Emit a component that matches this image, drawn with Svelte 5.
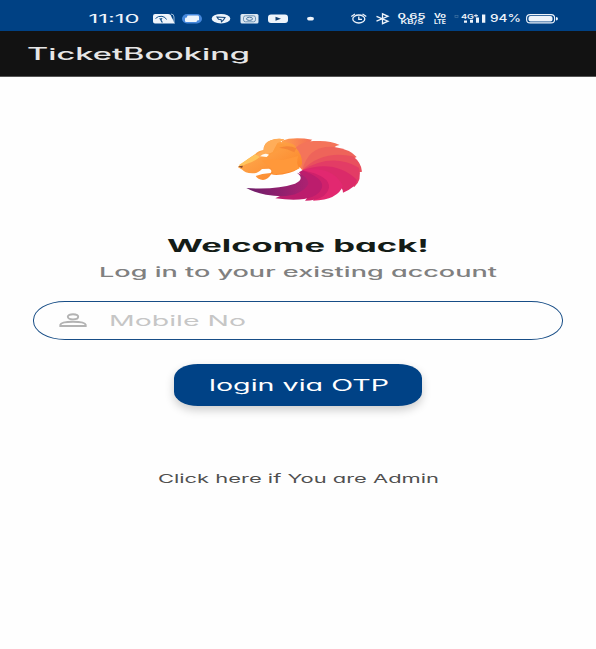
<script>
  const white = '#eef4fb';
</script>

{#snippet label(text, cls, width, size, base, height)}
  <svg class={cls} {width} {height} overflow="visible">
    <text x="0" y={base} font-size={size} textLength={width} lengthAdjust="spacingAndGlyphs">{text}</text>
  </svg>
{/snippet}

<div class="screen">
  <div class="status">
    <svg width="240" height="31" viewBox="80 0 240 31" fill={white}>
      <text x="88.5" y="22.7" font-size="11.3" font-weight="400" textLength="51" lengthAdjust="spacingAndGlyphs">11:10</text>
      <path d="M155 14H168Q171 14 171.5 17L175 23.5H155Q153 23.5 153 21.5V16Q153 14 155 14Z" />
      <path d="M155.500 18.5Q158 15.8 162 16.3Q165.500 17 166.500 19.500" fill="none" stroke="#15528b" />
      <path d="M159 18.500L162.500 18L161.500 20L163 22.500H161.500L160 19.500Z" fill="#15528b" />
      <path d="M171 14Q174 14 174 17V22" fill="none" stroke="#9ab9d5" />
      <rect x="182" y="14" width="20" height="9.5" rx="5" fill="#4688dc" />
      <rect x="187" y="15.5" width="12" height="5" rx="1.2" />
      <rect x="185" y="17.5" width="12" height="4.5" rx="1.2" />
      <ellipse cx="221" cy="18.7" rx="9.3" ry="4.8" />
      <path d="M217 17L225 17.5L223.500 20L221.500 21.800L221 19.500L218.500 19.300Z" fill="none" stroke="#15477c" stroke-width="1.1" />
      <rect x="240.5" y="14" width="18" height="9.5" rx="1.5" fill="#dce8f3" />
      <rect x="243.5" y="15.8" width="12" height="6" rx="2" fill="none" stroke="#6f94b5" />
      <ellipse cx="249.5" cy="18.8" rx="3" ry="1.6" fill="none" stroke="#49769f" />
      <rect x="268" y="14.5" width="20" height="8.5" rx="3" />
      <path d="M275.5 16.7L281 18.7L275.5 20.7Z" fill="#123f70" />
      <ellipse cx="310.5" cy="18.7" rx="3.4" ry="1.9" />
    </svg>
    <svg width="216" height="31" viewBox="345 0 216 31" fill={white}>
      <g fill="none" stroke={white} stroke-width="1.3">
        <ellipse cx="358.8" cy="19" rx="6" ry="4" />
        <path d="M351.3 16.5L355 14M366.3 16.5L362.5 14M358.8 16.5V19.3H362" />
        <path d="M376.5 16.3L388 21.2L382.5 23.7V13.8L388 16.3L376.5 21.2" />
      </g>
      <g font-weight="600">
        <text x="397.5" y="18.6" font-size="7.6" textLength="28" lengthAdjust="spacingAndGlyphs">0.65</text>
        <text x="400.5" y="24" font-size="6" textLength="23" lengthAdjust="spacingAndGlyphs">KB/S</text>
        <text x="434" y="18.4" font-size="6" font-weight="700" textLength="12" lengthAdjust="spacingAndGlyphs">Vo</text>
        <text x="434" y="23.8" font-size="6" font-weight="700" textLength="12" lengthAdjust="spacingAndGlyphs">LTE</text>
        <text x="461" y="18.8" font-size="6.3" textLength="13" lengthAdjust="spacingAndGlyphs">4G</text>
      </g>
      <path d="M474 15.700H478M476 14.200V17.200" stroke={white} />
      <rect x="455" y="15.5" width="3" height="2" fill="none" stroke="#3f72a3" stroke-width=".7" />
      <path d="M464 20.500H467V22.8H464ZM470 19.8H473V22.8H470ZM476 17.500H479V22.8H476ZM482 14.5H485.3V22.8H482Z" />
      <text x="490" y="22.4" font-size="10.5" font-weight="500" textLength="31" lengthAdjust="spacingAndGlyphs">94%</text>
      <rect x="526.6" y="14.6" width="28" height="8.3" rx="3.5" fill="none" stroke={white} stroke-width="1.1" />
      <rect x="528.500" y="16" width="24" height="5.6" rx="2" />
      <path d="M556 17Q558 17 558 18.8Q558 20.6 556 20.6Z" />
    </svg>
  </div>

  <header>{@render label('TicketBooking', 'title', 223, 16.6, 15, 20)}</header>

  <main>
    <svg class="lion" width="150" height="90" viewBox="0 0 450 270">
      <defs>
        <linearGradient id="face" x1="0" x2="1" y1="0" y2="1">
          <stop offset="0" stop-color="#ffb65b" /><stop offset="1" stop-color="#fb7e22" />
        </linearGradient>
        <linearGradient id="tail"><stop offset="0" stop-color="#6c1e69" /><stop offset="1" stop-color="#ad2171" /></linearGradient>
        <linearGradient id="top"><stop offset="0" stop-color="#ffa04b" /><stop offset="1" stop-color="#f36b58" /></linearGradient>
      </defs>
      <path d="M170 47Q205 34 262 44Q252 50 256 60L232 136L178 74Z" fill="url(#top)" />
      <path d="M212 68Q235 45 275 48Q315 46 344 60Q334 61 328 67Q276 72 232 136Q236 105 212 68Z" fill="#f4745a" />
      <path d="M232 136Q250 60 328 66Q376 73 395 96L384 101Q330 120 232 136Z" fill="#ee645a" />
      <path d="M232 136Q290 75 384 94Q409 113 411 140L402 142Q330 130 232 136Z" fill="#e9505e" />
      <path d="M232 136Q320 82 402 128Q412 164 388 186L378 180Q320 145 232 136Z" fill="#e33c65" />
      <path d="M232 136Q330 102 396 165Q393 187 354 203Q355 195 349 189Q310 150 232 136Z" fill="#db2a69" />
      <path d="M232 136Q320 120 354 182Q339 224 264 227Q290 195 232 136Z" fill="#e22870" />
      <path d="M232 136Q315 152 312 188Q302 226 240 227Q280 185 232 136Z" fill="#cf216b" />
      <path d="M222 142L232 136Q298 160 291 188Q272 236 151 220Q166 215 175 204L222 182Q240 158 222 142Z" fill="#bc1d6d" />
      <path d="M216 143Q252 154 250 178Q220 226 123 209Q89 203 64 189Q153 195 210 176Q241 162 216 143Z" fill="url(#tail)" />
      <path d="M116 75Q116 53 137 46Q157 39 178 43L165 51Q211 52 213 69Q232 89 231 116Q222 136 194 143Q158 153 139 148Q127 165 114 165Q98 164 92 153L112 147L137 144Q143 135 132 131L111 132Q98 146 82 145Q58 143 52 134L39 127Q43 119 90 88Q101 76 116 75Z" fill="url(#face)" />
      <path d="M135 47Q156 38 178 43L158 54L143 82L101 99L92 91L115 76Q116 54 135 47Z" fill="#ffad59" />
      <path d="M43 119L91 88L104 96Q86 112 62 118L43 127Z" fill="#ffc45c" />
      <path d="M157 55Q190 58 208 79L165 72L131 92L101 97L143 82Z" fill="#fd9c3e" />
      <path d="M109 107Q142 99 174 105L220 93Q211 114 224 130Q197 144 145 148Q146 128 109 107Z" fill="#ff983a" />
      <path d="M162 68Q190 58 214 70L208 82Q190 72 162 68Z" fill="#f58537" />
      <path d="M105 94Q117 82 132 89L125 96Z" fill="#fffaf2" />
      <path d="M39 124L54 122L51 129Z" fill="#8a4a2a" />
    </svg>

    {@render label('Welcome back!', 'welcome', 262, 16.8, 16, 20)}
    {@render label('Log in to your existing account', 'sub', 398, 13.5, 13, 18)}

    <div class="field">
      <svg class="person" width="28" height="16" viewBox="0 0 28 16" fill="none" stroke="#b3b3b3" stroke-width="1.9">
        <ellipse cx="14" cy="3.800" rx="5.2" ry="2.6" />
        <path d="M1.3 13V11.8Q2 8.7 14 8.7Q26 8.7 26.7 11.8V13Z" />
      </svg>
      {@render label('Mobile No', 'placeholder', 137, 14.2, 14, 18)}
    </div>

    <button>{@render label('login via OTP', 'login', 180, 15.2, 15, 20)}</button>

    {@render label('Click here if You are Admin', 'admin', 281, 12, 12, 16)}
  </main>
</div>

<style>
  .screen {
    width: 596px;
    height: 649px;
    background: #fefefe;
    display: flex;
    flex-direction: column;
    overflow: hidden;
    font-family: Inter, "Open Sans", sans-serif;
    font-feature-settings: "cv11";
  }
  svg { display: block; flex: none; }
  .status {
    height: 31px;
    background: #004184;
    display: flex;
    justify-content: space-between;
    padding: 0 35px 0 80px;
  }
  header {
    height: 46px;
    box-sizing: border-box;
    padding: 14px 0 0 27px;
    background: #121212;
    border-bottom: 1px solid #555;
  }
  .title { fill: #e6e6e6; font-weight: 500; }
  main {
    display: flex;
    flex-direction: column;
    align-items: center;
  }
  .lion { margin: 48px 0 0 4px; }
  .welcome { margin-top: 21px; fill: #141c17; font-weight: 700; }
  .sub { margin-top: 8px; fill: #808080; font-weight: 500; }
  .field {
    width: 530px;
    height: 39px;
    box-sizing: border-box;
    margin-top: 19px;
    border: solid #174d86;
    border-width: 1px 1.5px;
    border-radius: 32px / 19px;
    display: flex;
    padding: 10px 0 0 25px;
  }
  .placeholder { margin-left: 22px; fill: #c6c6c6; font-weight: 400; }
  .person { margin-top: 1px; }
  button {
    width: 248px;
    height: 42px;
    margin-top: 24px;
    padding: 12px 0 0 35px;
    box-sizing: border-box;
    border: 0;
    border-radius: 24px / 14px;
    background: #004286;
    box-shadow: 0 4px 10px rgba(0, 0, 0, .2);
    display: flex;
    align-items: flex-start;
    font: inherit;
    font-feature-settings: inherit;
  }
  .login { fill: #fff; font-weight: 400; }
  .admin { margin-top: 65px; fill: #505050; font-weight: 400; }
</style>
